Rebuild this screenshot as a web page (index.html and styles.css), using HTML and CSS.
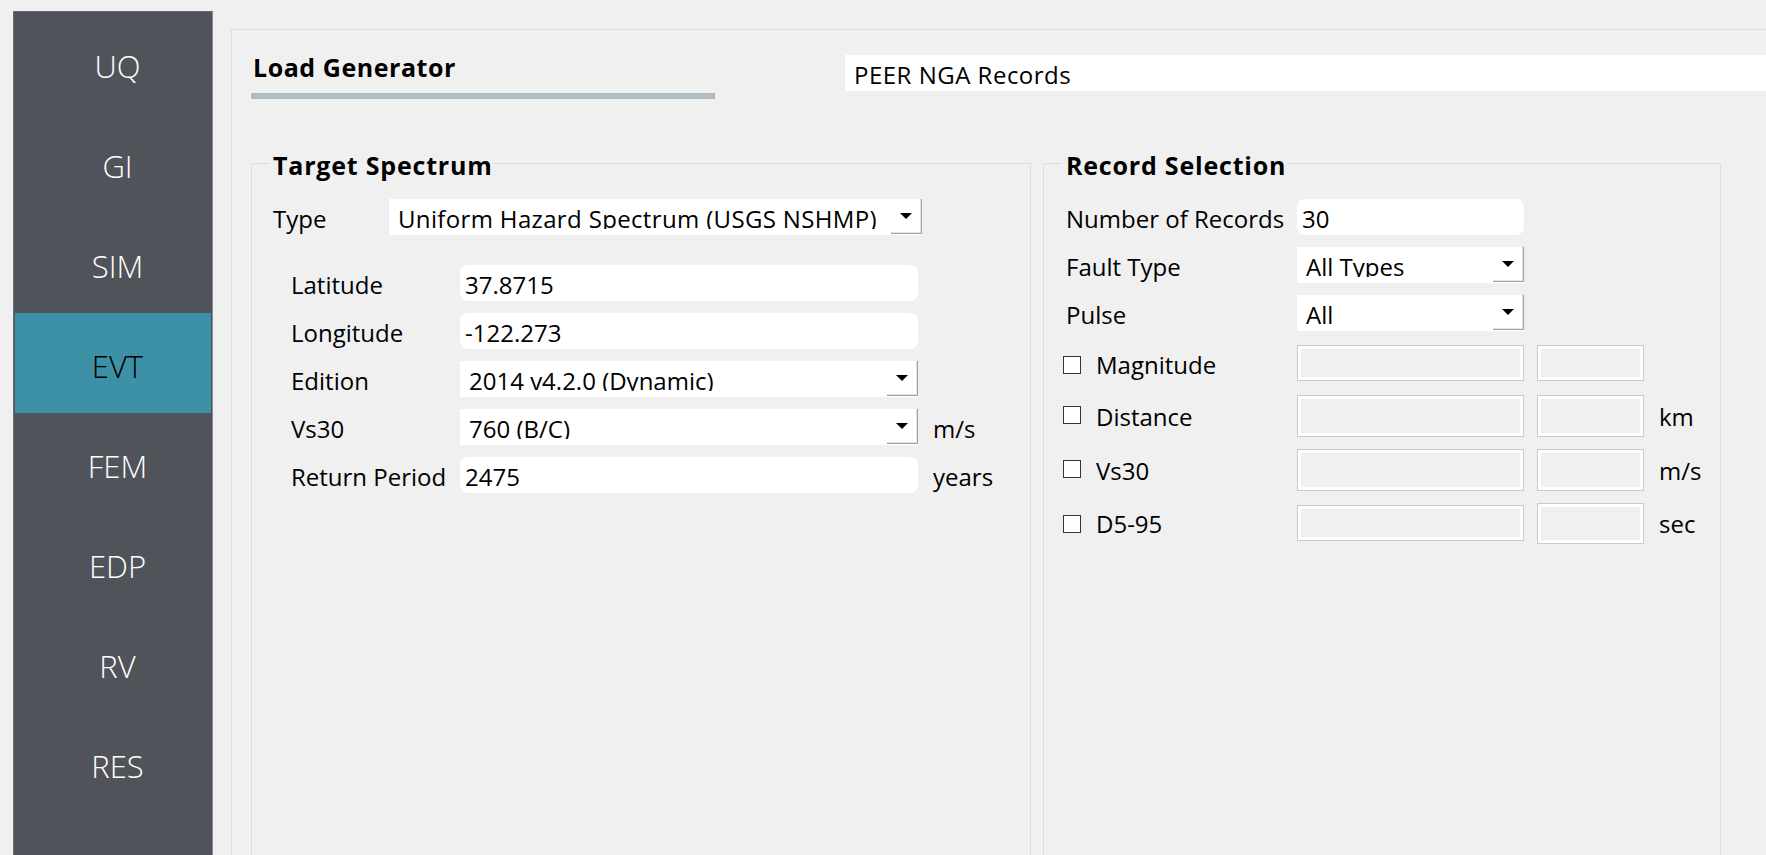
FILE: index.html
```html
<!DOCTYPE html>
<html>
<head>
<meta charset="utf-8">
<title>Load Generator</title>
<link rel="stylesheet" href="styles.css">
</head>
<body>
<div class="app">
  <nav class="sidebar">
    <div class="nav-item">UQ</div>
    <div class="nav-item">GI</div>
    <div class="nav-item">SIM</div>
    <div class="nav-item active">EVT</div>
    <div class="nav-item">FEM</div>
    <div class="nav-item">EDP</div>
    <div class="nav-item">RV</div>
    <div class="nav-item">RES</div>
  </nav>
  <main class="panel">
    <header class="panel-head">
      <div class="title-block">
        <div class="title">Load Generator</div>
        <div class="title-bar"></div>
      </div>
      <div class="source-select">PEER NGA Records</div>
    </header>
    <div class="groups">
      <fieldset class="group group-target">
        <legend>Target Spectrum</legend>
        <div class="type-row">
          <span class="lbl type-lbl">Type</span>
          <div class="combo combo-type">
            <span class="combo-text">Uniform Hazard Spectrum (USGS NSHMP)</span>
            <span class="combo-btn"><svg width="12" height="6" viewBox="0 0 12 6"><polygon points="0,0 12,0 6,6" fill="#000"/></svg></span>
          </div>
        </div>
        <div class="site-grid">
          <span class="lbl">Latitude</span>
          <div class="field">37.8715</div>
          <span class="unit"></span>

          <span class="lbl">Longitude</span>
          <div class="field">-122.273</div>
          <span class="unit"></span>

          <span class="lbl">Edition</span>
          <div class="combo combo-site">
            <span class="combo-text">2014 v4.2.0 (Dynamic)</span>
            <span class="combo-btn"><svg width="12" height="6" viewBox="0 0 12 6"><polygon points="0,0 12,0 6,6" fill="#000"/></svg></span>
          </div>
          <span class="unit"></span>

          <span class="lbl">Vs30</span>
          <div class="combo combo-site">
            <span class="combo-text">760 (B/C)</span>
            <span class="combo-btn"><svg width="12" height="6" viewBox="0 0 12 6"><polygon points="0,0 12,0 6,6" fill="#000"/></svg></span>
          </div>
          <span class="unit">m/s</span>

          <span class="lbl">Return Period</span>
          <div class="field">2475</div>
          <span class="unit">years</span>
        </div>
      </fieldset>

      <fieldset class="group group-records">
        <legend>Record Selection</legend>
        <div class="rec-row">
          <span class="lbl rec-lbl">Number of Records</span>
          <div class="field rec-field">30</div>
        </div>
        <div class="rec-row">
          <span class="lbl rec-lbl">Fault Type</span>
          <div class="combo rec-field">
            <span class="combo-text">All Types</span>
            <span class="combo-btn"><svg width="12" height="6" viewBox="0 0 12 6"><polygon points="0,0 12,0 6,6" fill="#000"/></svg></span>
          </div>
        </div>
        <div class="rec-row">
          <span class="lbl rec-lbl">Pulse</span>
          <div class="combo rec-field">
            <span class="combo-text">All</span>
            <span class="combo-btn"><svg width="12" height="6" viewBox="0 0 12 6"><polygon points="0,0 12,0 6,6" fill="#000"/></svg></span>
          </div>
        </div>
        <div class="rec-row filter-row row-mag">
          <div class="chk-lbl"><span class="check"></span><span class="lbl">Magnitude</span></div>
          <div class="dis dis-min"></div>
          <div class="dis dis-max"></div>
        </div>
        <div class="rec-row filter-row row-tall row-dist">
          <div class="chk-lbl"><span class="check"></span><span class="lbl">Distance</span></div>
          <div class="dis dis-min"></div>
          <div class="dis dis-max"></div>
          <span class="unit">km</span>
        </div>
        <div class="rec-row filter-row row-tall row-vs">
          <div class="chk-lbl"><span class="check"></span><span class="lbl">Vs30</span></div>
          <div class="dis dis-min"></div>
          <div class="dis dis-max"></div>
          <span class="unit">m/s</span>
        </div>
        <div class="rec-row filter-row row-d5">
          <div class="chk-lbl"><span class="check"></span><span class="lbl">D5-95</span></div>
          <div class="dis dis-min"></div>
          <div class="dis dis-max"></div>
          <span class="unit">sec</span>
        </div>
      </fieldset>
    </div>
  </main>
</div>
</body>
</html>
```
FILE: styles.css
```css
* {
  box-sizing: border-box;
}

html,
body {
  margin: 0;
  height: 100%;
  overflow: hidden;
}

body {
  background: #f0f0f0;
  font-family: "Open Sans", "Noto Sans", sans-serif;
  font-size: 24px;
  color: #000;
}

.app {
  display: flex;
  align-items: flex-start;
  padding: 11px 0 0 13px;
  height: 855px;
  overflow: hidden;
}

/* ---------- sidebar ---------- */
.sidebar {
  flex: none;
  width: 200px;
  height: 900px;
  padding: 1px;
  background: #50535a;
  border: 1px solid #676a71;
  border-right-color: #888c93;
  display: flex;
  flex-direction: column;
}

.nav-item {
  height: 100px;
  padding: 6px 0 0 9px;
  line-height: 94px;
  text-align: center;
  font-size: 31px;
  font-weight: 300;
  color: #fff;
}

.nav-item.active {
  background: #3d91a7;
  color: #000;
}

/* ---------- main panel ---------- */
.panel {
  flex: none;
  width: 1600px;
  height: 900px;
  margin: 18px 0 0 18px;
  padding: 20px 0 0 19px;
  border-top: 1px solid #dcdcdc;
  border-left: 1px solid #dcdcdc;
}

.panel-head {
  display: flex;
  align-items: flex-start;
}

.title-block {
  flex: none;
  width: 464px;
}

.title {
  padding-left: 2px;
  font-size: 25px;
  font-weight: 700;
  line-height: 34px;
  letter-spacing: 0.55px;
}

.title-bar {
  height: 6px;
  margin-top: 9px;
  background: #b0bcc4;
}

.source-select {
  flex: 1;
  height: 36px;
  margin: 5px 0 0 130px;
  padding: 4px 0 0 9px;
  background: #fff;
  line-height: 32px;
  letter-spacing: 0.5px;
  white-space: nowrap;
}

/* ---------- group boxes ---------- */
.groups {
  display: grid;
  grid-template-columns: 780px 678px;
  column-gap: 12px;
  margin-top: 46px;
}

.group {
  min-width: 0;
  height: 720px;
  margin: 0;
  padding: 17px 0 0 21px;
  border: 1px solid #dcdcdc;
}

.group-records {
  padding-left: 22px;
}

.group legend {
  margin-left: -4px;
  padding: 4px 1px 0 4px;
  font-size: 25px;
  font-weight: 700;
  line-height: 33px;
  letter-spacing: 0.8px;
}

.lbl {
  display: block;
  padding-top: 2px;
  line-height: 36px;
  white-space: nowrap;
}

.unit {
  display: block;
  padding: 2px 0 0 15px;
  line-height: 36px;
  white-space: nowrap;
}

.field {
  height: 36px;
  padding: 2px 0 0 5px;
  background: #fff;
  border-radius: 8px;
  line-height: 36px;
  white-space: nowrap;
}

.combo {
  display: flex;
  height: 36px;
  background: #fff;
}

.combo-text {
  flex: 1;
  height: 30px;
  padding: 2px 0 0 9px;
  overflow: hidden;
  line-height: 36px;
  white-space: nowrap;
}

.combo-type .combo-text {
  letter-spacing: 0.35px;
}

.combo-btn {
  flex: none;
  width: 31px;
  height: 35px;
  display: flex;
  align-items: center;
  justify-content: center;
  border-right: 1px solid #a0a0a0;
  border-bottom: 1px solid #a0a0a0;
  box-shadow: inset -1px -1px 0 #e3e3e3;
}

/* target spectrum */
.type-row {
  display: flex;
  height: 36px;
}

.type-lbl {
  width: 116px;
}

.combo-type {
  width: 533px;
}

.site-grid {
  display: grid;
  grid-template-columns: 169px 458px auto;
  grid-auto-rows: 36px;
  row-gap: 12px;
  margin: 30px 0 0 18px;
}

/* record selection */
.rec-row {
  display: flex;
  align-items: flex-start;
  height: 36px;
  margin-top: 12px;
}

.group-records legend + .rec-row {
  margin-top: 0;
}

.rec-lbl {
  width: 231px;
}

.rec-field {
  width: 227px;
}

.filter-row {
  margin-top: 14px;
}

.row-tall {
  height: 42px;
}

.row-vs,
.row-d5 {
  margin-top: 12px;
}

.row-d5 {
  height: 41px;
}

.chk-lbl {
  flex: none;
  width: 234px;
  margin-left: -3px;
  display: flex;
  align-items: flex-start;
}

.check {
  flex: none;
  width: 18px;
  height: 18px;
  margin: 11px 15px 0 0;
  background: #fff;
  border: 1px solid #333;
}

.row-tall .lbl,
.row-tall .unit {
  padding-top: 4px;
}

.row-d5 .lbl,
.row-d5 .unit {
  padding-top: 3px;
}

.row-d5 .check {
  margin-top: 12px;
}

.dis {
  flex: none;
  height: 36px;
  background: #f0f0f0;
  border: 1px solid #cbcbcb;
  box-shadow: inset 0 0 0 3px #fff;
}

.dis-min {
  width: 227px;
}

.dis-max {
  width: 107px;
  margin-left: 13px;
}

.row-tall .dis {
  height: 42px;
}

.row-d5 .dis-min {
  margin-top: 2px;
}

.row-d5 .dis-max {
  height: 41px;
}
```
